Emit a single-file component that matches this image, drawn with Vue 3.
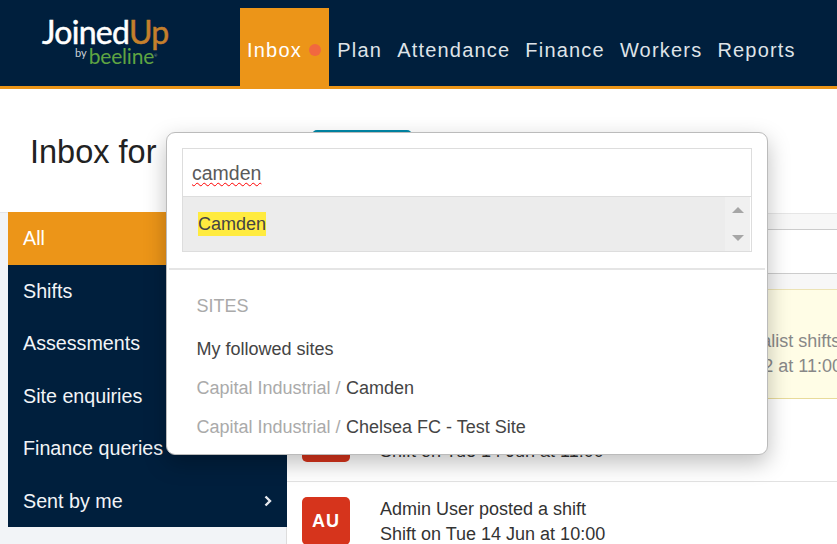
<template>
  <div class="app">
    <header class="topbar">
      <div class="logo">
        <div class="logo-main">Joined<span class="logo-up">Up</span></div>
        <div class="logo-sub"><span class="logo-by">by</span><span class="logo-beeline">beeline</span><span class="logo-reg">®</span></div>
      </div>
      <nav class="nav">
        <a v-for="item in navItems" :key="item" class="nav-item" :class="{ active: item === 'Inbox' }">
          {{ item }}<span v-if="item === 'Inbox'" class="nav-dot"></span>
        </a>
      </nav>
    </header>

    <section class="title-row">
      <h1 class="title">Inbox for</h1>
      <button class="teal-btn">Capital</button>
    </section>

    <div class="columns">
      <aside class="side">
        <ul class="side-menu">
          <li v-for="(item, i) in sideItems" :key="item" class="side-item" :class="{ active: i === 0 }">
            <span>{{ item }}</span>
            <svg class="chevron" width="10" height="12" viewBox="0 0 10 12"><path d="M2.5 1.5 7 6l-4.5 4.5" fill="none" stroke="currentColor" stroke-width="2.4" /></svg>
          </li>
        </ul>
      </aside>

      <div class="content">
        <div class="strip"></div>
        <div class="tools"></div>
        <div class="strip2"></div>
        <div class="row unread">
          <div class="row-text">
            <p>Capital Industrial – Camden posted 2 new specialist shifts</p>
            <p>Shift on Tue 14 Jun and 5 more until 30 Jun 2022 at 11:00</p>
          </div>
        </div>
        <div class="row" v-for="r in rows" :key="r.line2">
          <div class="avatar">AU</div>
          <div class="row-text">
            <p>{{ r.line1 }}</p>
            <p>{{ r.line2 }}</p>
          </div>
        </div>
      </div>
    </div>

    <div class="finder">
      <div class="finder-box">
        <div class="finder-input"><span class="typed">camden</span></div>
        <div class="finder-results">
          <div class="result"><mark>Camden</mark></div>
          <div class="scroll">
            <span class="arrow up"></span>
            <span class="arrow down"></span>
          </div>
        </div>
      </div>
      <hr class="finder-rule" />
      <div class="sites">
        <div class="sites-head">SITES</div>
        <div class="site-link">My followed sites</div>
        <div class="site-link"><span class="muted">Capital Industrial / </span>Camden</div>
        <div class="site-link"><span class="muted">Capital Industrial / </span>Chelsea FC - Test Site</div>
      </div>
    </div>
  </div>
</template>

<script setup>
const navItems = ['Inbox', 'Plan', 'Attendance', 'Finance', 'Workers', 'Reports']
const sideItems = ['All', 'Shifts', 'Assessments', 'Site enquiries', 'Finance queries', 'Sent by me']
const rows = [
  { line1: 'Admin User posted a shift', line2: 'Shift on Tue 14 Jun at 11:00' },
  { line1: 'Admin User posted a shift', line2: 'Shift on Tue 14 Jun at 10:00' }
]
</script>

<style>
html, body { margin: 0; height: 100%; overflow: hidden; background: #fff; }
</style>

<style scoped>
.app {
  position: relative;
  width: 837px;
  height: 544px;
  overflow: hidden;
  font-family: "Liberation Sans", Arial, sans-serif;
  color: #333;
}

.topbar {
  display: flex;
  height: 86px;
  background: #001f3d;
  border-bottom: 3px solid #ec9518;
}
.logo { width: 240px; padding: 16px 0 0 42px; box-sizing: border-box; font-family: Lato, sans-serif; }
.logo-main { font-size: 32px; line-height: 31px; color: #fff; letter-spacing: -0.7px; -webkit-text-stroke: 0.5px currentColor; }
.logo-up { color: #c47f2c; }
.logo-sub { display: flex; align-items: baseline; margin: -1px 0 0 33px; }
.logo-by { align-self: flex-start; margin: 1px 2px 0 0; font-size: 11px; line-height: 11px; color: #cdd3da; }
.logo-beeline { font-size: 21px; line-height: 20px; color: #5fa342; letter-spacing: -0.2px; }
.logo-reg { align-self: flex-start; margin-top: 8px; font-size: 4px; line-height: 4px; color: #9fb8a0; }
.nav { display: flex; padding-top: 8px; }
.nav-item {
  display: flex;
  align-items: center;
  padding: 6px 7.5px 0;
  font-size: 20px;
  letter-spacing: 1.2px;
  color: #dfe3e8;
}
.nav-item.active { background: #ec9518; color: #fff; width: 89px; margin-right: 0.8px; box-sizing: border-box; padding-left: 7px; padding-right: 0; }
.nav-dot { width: 12px; height: 12px; margin-left: 7px; border-radius: 50%; background: #f1683f; }

.title-row { display: flex; height: 123px; box-sizing: border-box; padding: 41px 0 0 30px; }
.title { margin: 0; width: 282px; font-size: 32.5px; font-weight: 400; line-height: 44px; color: #222; }
.teal-btn { width: 100px; height: 40px; border: 0; border-radius: 5px; background: #0088a8; color: #fff; }

.columns { display: flex; height: 332px; background: #f2f4f7; padding-left: 8px; box-shadow: inset 0 1px 0 #e4e6ea; }
.side { width: 278px; flex: none; }
.side-menu { position: relative; margin: 0 -1px 0 0; padding: 0; list-style: none; background: #001f3d; }
.side-item {
  display: flex;
  align-items: center;
  justify-content: space-between;
  box-sizing: border-box;
  height: 52.5px;
  padding: 1px 14px 0 15px;
  font-size: 19.7px;
  color: #f2f4f7;
}
.side-item.active { background: #ec9518; color: #fff; }
.chevron { color: #e6e9ee; }

.content { flex: 1; padding-top: 1px; background: #fff; border-left: 1px solid #ddd; }
.strip { height: 15px; background: #f7f7f7; border-top: 1px solid #e6e6e6; border-bottom: 1px solid #ccc; }
.tools { height: 43px; border-bottom: 1px solid #ccc; }
.strip2 { height: 15px; background: #f7f7f7; }
.row { display: flex; box-sizing: border-box; height: 83px; padding: 15px 14px 0 15px; border-bottom: 1px solid #e2e2e2; }
.row.unread { height: 110px; padding-top: 39px; background: #fffde6; border-top: 1px solid #ece3b5; border-bottom: 1px solid #e8db9a; color: #888; }
.row-text { margin-left: 78px; white-space: nowrap; font-size: 18px; line-height: 25px; }
.avatar + .row-text { margin-left: 30px; }
.row-text p { margin: 0; }
.avatar {
  flex: none;
  width: 48px;
  height: 48px;
  border-radius: 5px;
  background: #d6341c;
  color: #fff;
  font-size: 18px;
  font-weight: 700;
  letter-spacing: 1px;
  display: flex;
  align-items: center;
  justify-content: center;
}

.finder {
  position: absolute;
  left: 166px;
  top: 132px;
  width: 602px;
  height: 323px;
  box-sizing: border-box;
  background: #fff;
  border: 1px solid #bbb;
  border-radius: 9px;
  box-shadow: 0 8px 22px rgba(0, 0, 0, 0.25);
  padding: 15px 15px 0;
}
.finder-box { border: 1px solid #ddd; width: 570px; box-sizing: border-box; }
.finder-input { height: 47px; padding-left: 9px; font-size: 19.5px; line-height: 49px; color: #5a5a5a; border-bottom: 1px solid #ddd; }
.typed { text-decoration: underline wavy #f00 1.2px; text-underline-offset: 2px; }
.finder-results { display: flex; height: 54px; background: #ececec; margin-right: 1px; }
.result { flex: 1; padding-left: 15px; font-size: 18px; line-height: 54px; color: #444; }
.result mark { background: #ffeb3f; color: #444; padding: 2px 0; }
.scroll { width: 25px; background: #f0f0f0; display: flex; flex-direction: column; align-items: center; justify-content: space-between; padding: 10px 0; box-sizing: border-box; }
.arrow { width: 0; height: 0; border-left: 6px solid transparent; border-right: 6px solid transparent; }
.arrow.up { border-bottom: 6px solid #a6a6a6; }
.arrow.down { border-top: 6px solid #a6a6a6; }
.finder-rule { border: 0; border-top: 2px solid #e5e5e5; margin: 16px -13px 0; }
.sites { padding: 23px 0 0 14.5px; font-size: 18px; color: #444; }
.sites-head { color: #aaa; line-height: 26px; margin-bottom: 17px; }
.site-link { line-height: 26px; margin-bottom: 13px; }
.muted { color: #aaa; margin-right: 0.5px; }
</style>
